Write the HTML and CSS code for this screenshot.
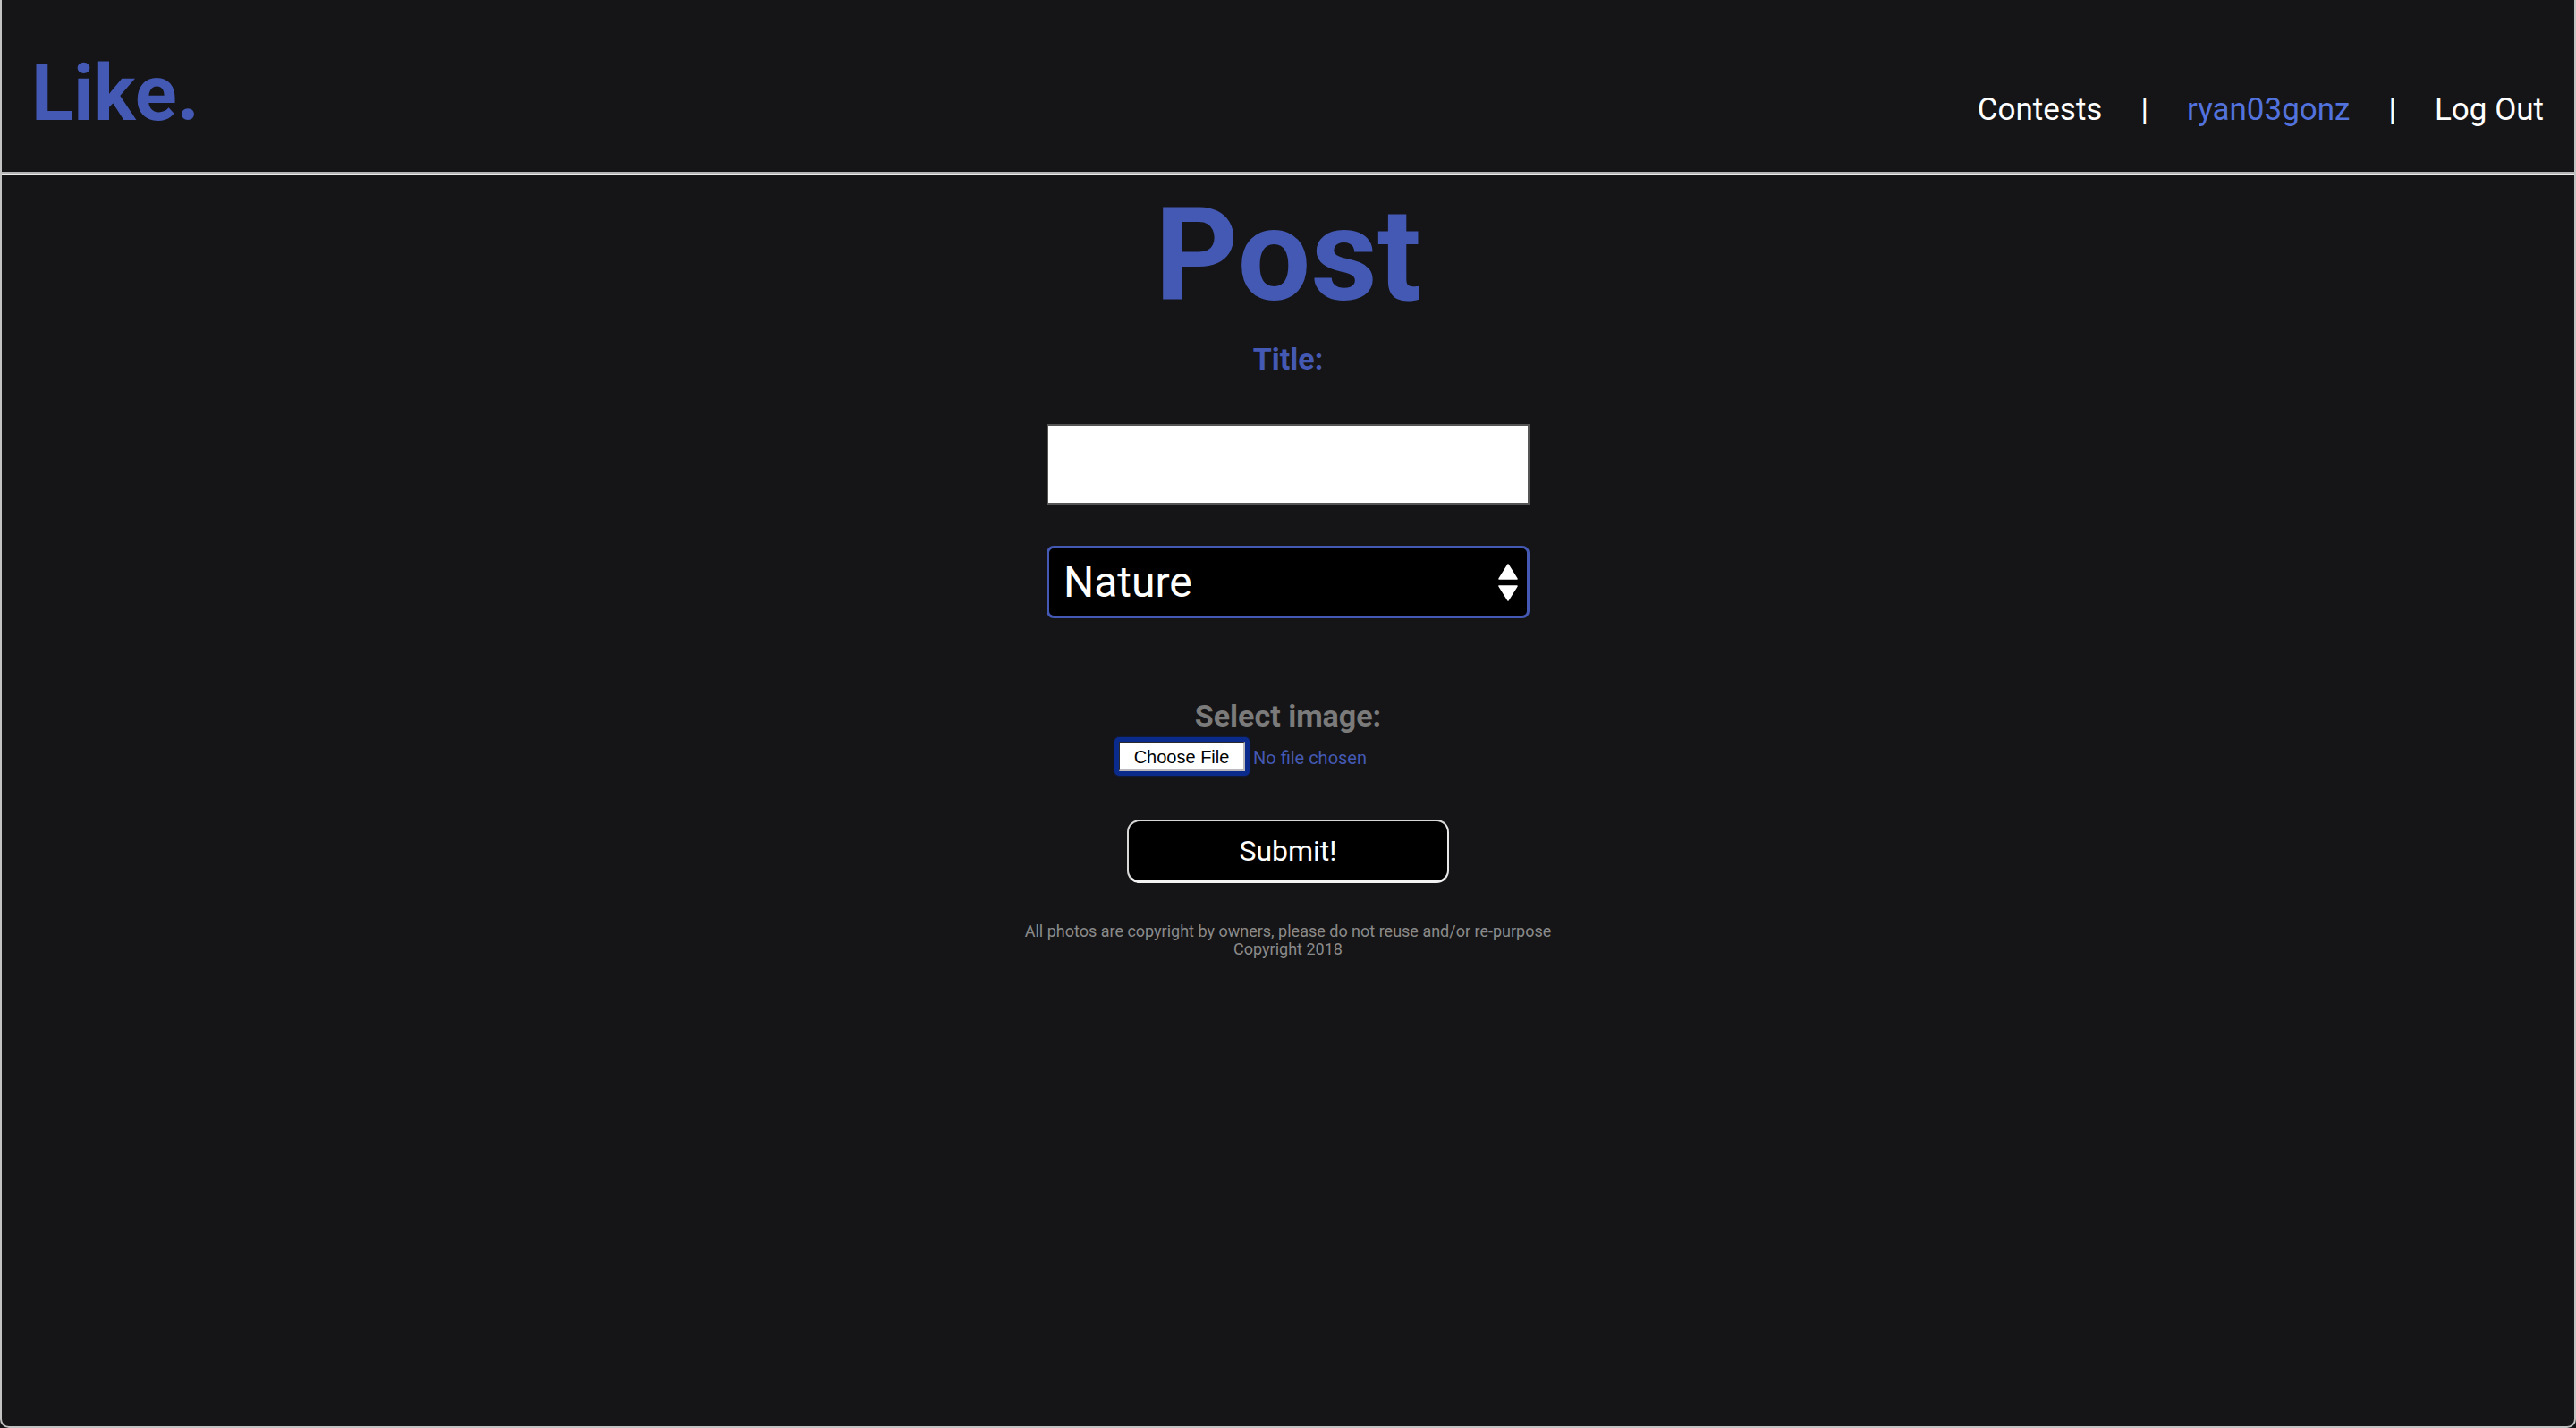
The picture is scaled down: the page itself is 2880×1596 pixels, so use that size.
FILE: index.html
```html
<!DOCTYPE html>
<html lang="en">
<head>
<meta charset="utf-8">
<title>Like. - Post</title>
<link rel="stylesheet" href="styles.css">
</head>
<body>
<div class="frame">
  <header class="topbar">
    <a class="logo" href="#">Like.</a>
    <nav class="nav">
      <a class="nav-link" href="#">Contests</a>
      <span class="sep">|</span>
      <a class="nav-link user" href="#">ryan03gonz</a>
      <span class="sep">|</span>
      <a class="nav-link" href="#">Log Out</a>
    </nav>
  </header>
  <main class="content">
    <h1 class="page-title">Post</h1>
    <label class="field-label" for="title">Title:</label>
    <input class="title-input" id="title" type="text">
    <div class="select-box">
      <span class="select-value">Nature</span>
      <svg class="select-arrows" width="22" height="42" viewBox="0 0 22 42">
        <path d="M11 1 L21 17 L1 17 Z" fill="#fff" stroke="#fff" stroke-width="1.5" stroke-linejoin="round"/>
        <path d="M1 25 L21 25 L11 41 Z" fill="#fff" stroke="#fff" stroke-width="1.5" stroke-linejoin="round"/>
      </svg>
    </div>
    <div class="image-label">Select image:</div>
    <div class="file-row">
      <span class="file-ring"><span class="file-btn">Choose File</span></span>
      <span class="file-status">No file chosen</span>
    </div>
    <button class="submit-btn" type="button">Submit!</button>
    <footer class="footer">
      <div>All photos are copyright by owners, please do not reuse and/or re-purpose</div>
      <div>Copyright 2018</div>
    </footer>
  </main>
</div>
</body>
</html>
```
FILE: styles.css
```css
html, body {
  margin: 0;
  padding: 0;
  background: #151517;
}

.frame {
  box-sizing: border-box;
  width: 2880px;
  height: 1596px;
  background: #151517;
  border: 2px solid #c3c3c3;
  border-top: none;
  border-radius: 0 0 10px 10px;
  font-family: Roboto, "Liberation Sans", sans-serif;
  overflow: hidden;
}

.topbar {
  height: 139px;
  padding: 53px 34px 0 33px;
  display: flex;
  align-items: baseline;
  justify-content: space-between;
  border-bottom: 2px solid #b5b5b5;
  box-shadow: 0 2px 0 #ececec;
}

.logo {
  font-size: 87px;
  font-weight: 700;
  color: #4459b3;
  text-decoration: none;
  line-height: normal;
}

.nav {
  display: flex;
  align-items: baseline;
  font-size: 35px;
}

.nav-link {
  color: #ffffff;
  text-decoration: none;
}

.nav-link.user {
  color: #5272de;
}

.sep {
  color: #ffffff;
  margin: 0 43px;
}

.content {
  padding-top: 6px;
  display: flex;
  flex-direction: column;
  align-items: center;
}

.page-title {
  margin: 0;
  font-size: 145px;
  font-weight: 700;
  line-height: normal;
  color: #4459b3;
}

.field-label {
  margin-top: 11px;
  font-size: 34px;
  font-weight: 700;
  color: #4459b3;
}

.title-input {
  box-sizing: border-box;
  margin-top: 53px;
  width: 540px;
  height: 90px;
  border: 2px solid #555555;
  background: #ffffff;
  padding: 0 12px;
  font-size: 30px;
  outline: none;
}

.select-box {
  box-sizing: border-box;
  margin-top: 46px;
  width: 540px;
  height: 81px;
  border: 3px solid #4459b3;
  border-radius: 8px;
  background: #000000;
  display: flex;
  align-items: center;
  justify-content: space-between;
  padding: 0 10px 0 16px;
}

.select-value {
  color: #ffffff;
  font-size: 48px;
}

.select-arrows {
  display: block;
}

.image-label {
  margin-top: 89px;
  font-size: 34px;
  font-weight: 700;
  color: #7b7b7b;
}

.file-row {
  margin-top: 4px;
  width: 388px;
  display: flex;
  align-items: center;
}

.file-ring {
  display: inline-flex;
  border: 5px solid #0b2b8c;
  border-radius: 5px;
  box-shadow: 0 0 2px #0b2b8c;
}

.file-btn {
  box-sizing: border-box;
  width: 141px;
  height: 33px;
  padding-top: 3px;
  background: #ffffff;
  border-top: 1px solid #2a2a2a;
  border-left: 1px solid #2a2a2a;
  border-right: 2px solid #b9b9bd;
  border-bottom: 2px solid #b9b9bd;
  font-family: "Liberation Sans", Arial, sans-serif;
  font-size: 20px;
  color: #000000;
  display: flex;
  align-items: center;
  justify-content: center;
}

.file-status {
  margin-left: 4px;
  padding-top: 3px;
  font-size: 20px;
  color: #4459b3;
}

.submit-btn {
  box-sizing: border-box;
  margin-top: 49px;
  width: 360px;
  height: 71px;
  background: #000000;
  color: #ffffff;
  border: 2px solid #d8d8d8;
  border-bottom-width: 3px;
  border-right-color: #e8e8e8;
  border-bottom-color: #f2f2f2;
  border-radius: 14px;
  font-family: Roboto, "Liberation Sans", sans-serif;
  font-size: 32px;
  padding: 0;
}

.footer {
  margin-top: 44px;
  font-size: 18px;
  color: #8a8a8a;
  text-align: center;
  line-height: 20px;
}
```
